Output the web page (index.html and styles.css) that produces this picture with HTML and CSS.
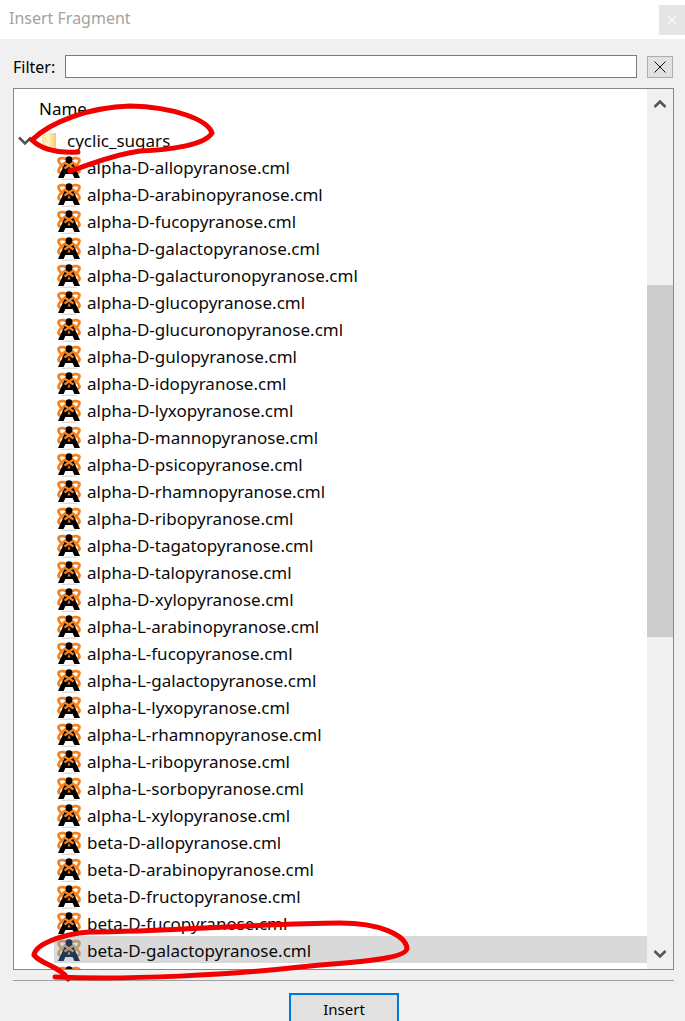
FILE: index.html
```html
<!DOCTYPE html>
<html>
<head>
  <title>Insert Fragment</title>
  <meta http-equiv="Content-Type" content="text/html; charset=utf-8">
  <link rel="stylesheet" href="styles.css">
</head>
<body>
<svg class="defs" width="0" height="0">
  <symbol id="avo" viewBox="0 0 24 24">
    <ellipse cx="12" cy="23.4" rx="8" ry="1" fill="#dcdcdc"/>
    <g class="avo-orbit">
      <ellipse cx="12" cy="9.5" rx="12" ry="4.6" transform="rotate(32 12 9.5)"/>
      <ellipse cx="12" cy="9.5" rx="12" ry="4.6" transform="rotate(-32 12 9.5)"/>
    </g>
    <path class="avo-body" d="M9 5 H15 L23 22 H17.4 L15.6 18 H8.4 L6.6 22 H1 Z M12 12 L10.4 15.6 H13.6 Z" fill-rule="evenodd"/>
    <path class="avo-cross" d="M7.5 6.5 L16.5 12.5 M16.5 6.5 L7.5 12.5"/>
    <circle class="avo-body" cx="12" cy="3.6" r="3.4"/>
  </symbol>
</svg>
<div class="titlebar">
  <span class="title">Insert Fragment</span>
  <span class="close"><svg width="12" height="12" viewBox="0 0 12 12"><path d="M2 2 L10 10 M10 2 L2 10" stroke="#f4f4f4" stroke-width="2.4"/></svg></span>
</div>
<div class="dialog">
  <div class="filter">
    <label>Filter:</label>
    <input type="text">
    <button class="clear"><svg width="14" height="14" viewBox="0 0 14 14"><path d="M1.5 1.5 L12.5 12.5 M12.5 1.5 L1.5 12.5" stroke="#111" stroke-width="1" fill="none"/></svg></button>
  </div>
  <div class="tree">
    <div class="list">
      <div class="head">Name</div>
      <div class="row folder">
        <svg class="chev" width="16" height="10" viewBox="0 0 16 10"><path d="M2 1.5 L8 7.5 L14 1.5" stroke="#555" stroke-width="2.6" fill="none"/></svg>
        <span class="foldericon"></span>
        <span>cyclic_sugars</span>
      </div>
      <div class="row"><svg class="icon"><use href="#avo"/></svg>alpha-D-allopyranose.cml</div>
      <div class="row"><svg class="icon"><use href="#avo"/></svg>alpha-D-arabinopyranose.cml</div>
      <div class="row"><svg class="icon"><use href="#avo"/></svg>alpha-D-fucopyranose.cml</div>
      <div class="row"><svg class="icon"><use href="#avo"/></svg>alpha-D-galactopyranose.cml</div>
      <div class="row"><svg class="icon"><use href="#avo"/></svg>alpha-D-galacturonopyranose.cml</div>
      <div class="row"><svg class="icon"><use href="#avo"/></svg>alpha-D-glucopyranose.cml</div>
      <div class="row"><svg class="icon"><use href="#avo"/></svg>alpha-D-glucuronopyranose.cml</div>
      <div class="row"><svg class="icon"><use href="#avo"/></svg>alpha-D-gulopyranose.cml</div>
      <div class="row"><svg class="icon"><use href="#avo"/></svg>alpha-D-idopyranose.cml</div>
      <div class="row"><svg class="icon"><use href="#avo"/></svg>alpha-D-lyxopyranose.cml</div>
      <div class="row"><svg class="icon"><use href="#avo"/></svg>alpha-D-mannopyranose.cml</div>
      <div class="row"><svg class="icon"><use href="#avo"/></svg>alpha-D-psicopyranose.cml</div>
      <div class="row"><svg class="icon"><use href="#avo"/></svg>alpha-D-rhamnopyranose.cml</div>
      <div class="row"><svg class="icon"><use href="#avo"/></svg>alpha-D-ribopyranose.cml</div>
      <div class="row"><svg class="icon"><use href="#avo"/></svg>alpha-D-tagatopyranose.cml</div>
      <div class="row"><svg class="icon"><use href="#avo"/></svg>alpha-D-talopyranose.cml</div>
      <div class="row"><svg class="icon"><use href="#avo"/></svg>alpha-D-xylopyranose.cml</div>
      <div class="row"><svg class="icon"><use href="#avo"/></svg>alpha-L-arabinopyranose.cml</div>
      <div class="row"><svg class="icon"><use href="#avo"/></svg>alpha-L-fucopyranose.cml</div>
      <div class="row"><svg class="icon"><use href="#avo"/></svg>alpha-L-galactopyranose.cml</div>
      <div class="row"><svg class="icon"><use href="#avo"/></svg>alpha-L-lyxopyranose.cml</div>
      <div class="row"><svg class="icon"><use href="#avo"/></svg>alpha-L-rhamnopyranose.cml</div>
      <div class="row"><svg class="icon"><use href="#avo"/></svg>alpha-L-ribopyranose.cml</div>
      <div class="row"><svg class="icon"><use href="#avo"/></svg>alpha-L-sorbopyranose.cml</div>
      <div class="row"><svg class="icon"><use href="#avo"/></svg>alpha-L-xylopyranose.cml</div>
      <div class="row"><svg class="icon"><use href="#avo"/></svg>beta-D-allopyranose.cml</div>
      <div class="row"><svg class="icon"><use href="#avo"/></svg>beta-D-arabinopyranose.cml</div>
      <div class="row"><svg class="icon"><use href="#avo"/></svg>beta-D-fructopyranose.cml</div>
      <div class="row"><svg class="icon"><use href="#avo"/></svg>beta-D-fucopyranose.cml</div>
      <div class="row selected"><svg class="icon"><use href="#avo"/></svg>beta-D-galactopyranose.cml</div>
      <div class="row"><svg class="icon"><use href="#avo"/></svg></div>
    </div>
    <div class="scrollbar">
      <svg class="arrow" width="16" height="10" viewBox="0 0 16 10"><path d="M2.5 8 L8 2.5 L13.5 8" stroke="#555" stroke-width="2.6" fill="none"/></svg>
      <div class="track"><div class="thumb"></div></div>
      <svg class="arrow" width="16" height="10" viewBox="0 0 16 10"><path d="M2.5 2 L8 7.5 L13.5 2" stroke="#555" stroke-width="2.6" fill="none"/></svg>
    </div>
  </div>
  <div class="separator"></div>
  <div class="actions"><button class="insert">Insert</button></div>
</div>
<!-- red pen marks drawn over the screenshot -->
<svg class="ink" width="685" height="1021" viewBox="0 0 685 1021">
  <path d="M70 171 C 90 165 110 155 140 151 C 170 150 205 145 212 133 C 208 120 175 107 130 106 C 90 107 50 122 32 140 C 42 150 60 153 78 152" fill="none" stroke="#f00000" stroke-width="5" stroke-linecap="round"/>
  <path d="M55 977 C 130 980 230 975 300 967 C 350 962 407 960 407 948 C 405 935 380 923 340 923 C 270 923 160 932 90 932 C 60 934 35 945 34 955 C 40 964 60 966 68 979" fill="none" stroke="#f00000" stroke-width="5" stroke-linecap="round"/>
</svg>
</body>
</html>
```

FILE: styles.css
```css
html, body {
  margin: 0;
  padding: 0;
  height: 1021px;
  overflow: hidden;
}

body {
  position: relative;
  background: #f0f0f0;
  font-family: "Noto Sans", "Open Sans", sans-serif;
  font-size: 17px;
  color: #000;
}

.defs {
  position: absolute;
}

.titlebar {
  display: flex;
  justify-content: space-between;
  align-items: center;
  height: 39px;
  padding: 0 0 0 9px;
  background: #fff;
}

.title {
  color: #a3a3a3;
  font-size: 16px;
  padding-bottom: 4px;
}

.close {
  display: flex;
  align-items: center;
  justify-content: center;
  width: 26px;
  height: 30px;
  background: #e5e5e5;
}

.dialog {
  padding: 0 11px 0 13px;
}

.filter {
  display: flex;
  align-items: center;
  height: 23px;
  padding: 16px 0 10px;
}

.filter label {
  width: 52px;
  font-size: 16px;
}

.filter input {
  width: 572px;
  height: 23px;
  box-sizing: border-box;
  border: 1px solid #7a7a7a;
  background: #fff;
  padding: 0;
  margin: 0;
}

.clear {
  display: flex;
  align-items: center;
  justify-content: center;
  width: 26px;
  height: 22px;
  margin-left: 10px;
  padding: 0;
  border: 1px solid #adadad;
  background: #e1e1e1;
}

.tree {
  display: flex;
  height: 882px;
  box-sizing: border-box;
  border: 1px solid #828790;
  background: #fff;
}

.list {
  flex: 1;
  overflow: hidden;
}

.head {
  height: 37px;
  line-height: 40px;
  padding-left: 25px;
}

.row {
  display: flex;
  align-items: center;
  box-sizing: border-box;
  height: 27px;
  padding: 2px 0 0 43px;
  white-space: nowrap;
  color: #0a0a0a;
}

.row.folder {
  padding-left: 3px;
}

.row.selected {
  margin-left: 40px;
  padding-left: 3px;
  background: #d9d9d9;
}

.icon {
  width: 24px;
  height: 24px;
  margin-right: 6px;
  flex: none;
}

.avo-body {
  fill: var(--avo-body, #000);
}

.avo-orbit {
  fill: none;
  stroke: var(--avo-orbit, #f58220);
  stroke-width: 2.8;
}

.avo-cross {
  fill: none;
  stroke: var(--avo-orbit, #f58220);
  stroke-width: 2.2;
}

.selected .icon {
  --avo-body: #1d3853;
  --avo-orbit: #b99a78;
}

.chev {
  margin-right: 9px;
}

.foldericon {
  width: 14px;
  height: 16px;
  margin-right: 11px;
  background: linear-gradient(90deg, #fbe39a 0%, #fff2c4 45%, #f3cc66 100%);
}

.scrollbar {
  display: flex;
  flex-direction: column;
  width: 26px;
  background: #f0f0f0;
}

.arrow {
  align-self: center;
  height: 30px;
  flex: none;
}

.track {
  flex: 1;
  padding-top: 166px;
}

.thumb {
  height: 352px;
  background: #cdcdcd;
}

.separator {
  height: 1px;
  margin-top: 10px;
  background: #a0a0a0;
}

.actions {
  display: flex;
  justify-content: center;
  padding: 12px 0 0 1px;
}

.insert {
  width: 110px;
  height: 32px;
  border: 2px solid #0078d7;
  background: #e1e1e1;
  font-family: "Noto Sans", sans-serif;
  font-size: 15px;
  padding: 0;
}

.ink {
  position: absolute;
  left: 0;
  top: 0;
}
```
